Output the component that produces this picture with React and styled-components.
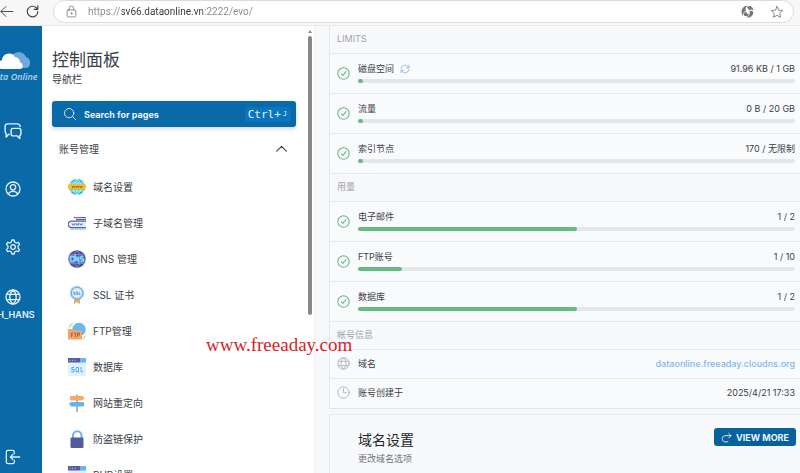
import React from 'react'
import styled, { createGlobalStyle, css } from 'styled-components'

const colors = {
    brand: '#0a6aa8',
    brandDark: '#07619a',
    text: '#3b4048',
    muted: '#a0a2ac',
    line: '#e6e8ec',
    panel: '#f8f9fb',
    green: '#66bb84',
    link: '#7fb9e6',
}

const GlobalStyle = createGlobalStyle`
    * {
        box-sizing: border-box;
    }

    body {
        margin: 0;
        overflow: hidden;
        background: white;
        color: ${colors.text};
        font-family: Inter, "Noto Sans CJK SC", sans-serif;
        font-size: 9px;
    }

    h1, h2, h3, p, ul {
        margin: 0;
        padding: 0;
        font-weight: 400;
    }

    ul {
        list-style: none;
    }

    button {
        border: 0;
        padding: 0;
        background: none;
        font-family: inherit;
        color: inherit;
    }

    a {
        color: inherit;
        text-decoration: none;
    }

    svg {
        display: block;
        flex: none;
    }
`

const Page = styled.div`
    position: relative;
    display: flex;
    flex-direction: column;
    height: 100vh;
    overflow: hidden;
`

/* browser bar */

const BrowserBar = styled.header`
    display: flex;
    flex: none;
    align-items: center;
    height: 26px;
    padding: 0 6px 2px 0;
    background: #f7f7f7;
    border-bottom: 1px solid #e9e9eb;
    color: #444;
`

const BarButton = styled.button`
    display: flex;
    align-items: center;
    justify-content: center;
    width: 26px;
    height: 22px;

    &:first-child {
        margin-left: -7px;
    }
`

const AddressBox = styled.label`
    display: flex;
    flex: 1;
    align-items: center;
    height: 23px;
    margin-left: 8px;
    padding: 0 2px 0 11px;
    background: white;
    border: 1px solid #dcdcdc;
    border-radius: 12px;
    color: #777;

    /* the host is darker than the rest of the address */
    input {
        flex: 1;
        min-width: 0;
        margin-left: 10px;
        padding: 0;
        border: 0;
        outline: 0;
        background: linear-gradient(to right, #888 34px, #333 34px 115px, #888 115px);
        background-clip: text;
        -webkit-text-fill-color: transparent;
        font: 10px/16px Roboto, sans-serif;
    }

    ${BarButton} {
        width: 29px;
        margin: 0;
    }
`

const Layout = styled.div`
    display: grid;
    flex: 1;
    grid-template-columns: 42px 272px 1fr;
    min-height: 0;
`

/* left rail, its left edge is scrolled out of the window */

const Rail = styled.nav`
    display: flex;
    flex-direction: column;
    align-items: center;
    width: 58px;
    margin-left: -16px;
    padding: 24px 0 6px;
    background: ${colors.brand};
    color: #e4f1fa;
`

const Logo = styled.a`
    display: flex;
    flex-direction: column;
    align-items: center;
    color: #b5d6ec;
    font: italic 600 9px/14px "Open Sans", sans-serif;
    white-space: nowrap;
`

const RailButton = styled.button`
    display: flex;
    flex-direction: column;
    align-items: center;
    justify-content: center;
    gap: 4px;
    height: ${(props) => (props.$small ? '20px' : '58px')};
    font-size: 9px;
    line-height: 12px;
    font-weight: 600;
`

const RailGroup = styled.div`
    display: flex;
    flex: 1;
    flex-direction: column;
    align-items: center;
    margin-top: 18px;
`

/* navigation */

const Sidebar = styled.aside`
    display: flex;
    justify-content: space-between;
    min-height: 0;
    background: white;
    overflow: hidden;
`

const SidebarBody = styled.div`
    flex: 1;
    padding: 22px 10px 0;

    h1 {
        font-size: 17px;
        line-height: 24px;
    }

    > p {
        font-size: 10px;
        line-height: 14px;
    }
`

const ScrollTrack = styled.div`
    display: flex;
    flex-direction: column;
    align-items: center;
    width: 8px;
    padding-top: 4px;
    color: #888;
`

const ScrollThumb = styled.div`
    width: 4px;
    height: 63%;
    margin-top: 3px;
    border-radius: 2px;
    background: #888;
`

const SearchButton = styled.button`
    display: flex;
    align-items: center;
    width: 100%;
    height: 26px;
    margin-top: 15px;
    padding: 0 5px 0 11px;
    border-radius: 3px;
    background: ${colors.brand};
    box-shadow: 0 2px 4px rgba(10, 60, 110, 0.2);
    color: #e8f3fb;
    font-size: 9px;
    font-weight: 700;

    span {
        flex: 1;
        margin-left: 7px;
        text-align: left;
    }

    kbd {
        display: flex;
        align-items: center;
        gap: 2px;
        height: 15px;
        padding: 0 4px 0 3px;
        border-radius: 2px;
        background: #0b76bd;
        font: 11px/15px "DejaVu Sans Mono", monospace;
    }

    kbd small {
        font-size: 7px;
    }
`

const GroupButton = styled.button`
    display: flex;
    align-items: center;
    justify-content: space-between;
    width: 100%;
    height: 16px;
    margin-top: 13px;
    padding: 0 8px 0 7px;
    font-size: 10px;
`

const NavList = styled.ul`
    margin-top: 13px;
    padding-left: 16px;

    a {
        display: flex;
        align-items: center;
        gap: 7px;
        height: 36px;
        font-size: 10px;
        line-height: 14px;
        white-space: nowrap;
    }
`

/* statistics */

const Main = styled.main`
    display: flex;
    flex-direction: column;
    gap: 5px;
    min-width: 0;
    padding-left: 14px;
    background: #f7f8fa;
    border-left: 1px solid #f0f1f4;
`

const card = css`
    background: ${colors.panel};
    border-left: 1px solid ${colors.line};
`

const StatsCard = styled.section`
    ${card}
    border-bottom: 1px solid #dfe1e6;
`

const GroupTitle = styled.h3`
    height: 28px;
    padding-left: 7px;
    border-bottom: 1px solid ${colors.line};
    color: ${colors.muted};
    font-size: 9px;
    line-height: 26px;
`

const StatRow = styled.div`
    display: flex;
    align-items: center;
    gap: 8px;
    height: ${(props) => (props.$slim ? '29px' : '40px')};
    padding: 0 5px 2px 7px;
    border-bottom: 1px solid ${colors.line};
    background: #f9fafc;

    &:last-child {
        border-bottom: 0;
    }
`

const StatBody = styled.div`
    flex: 1;
`

const StatText = styled.div`
    display: flex;
    align-items: center;
    gap: 6px;
    font-size: 9px;
    line-height: 13px;

    button {
        color: ${colors.link};
    }

    > :last-child {
        margin-left: auto;
    }
`

const StatLink = styled.a`
    color: ${colors.link};
    font-weight: 500;
`

const Track = styled.div`
    height: 4px;
    margin-top: 4px;
    border-radius: 2px;
    background: #e5e6e8;
`

const Fill = styled.div`
    height: 100%;
    min-width: 5px;
    border-radius: 2px;
    background: ${colors.green};
`

const DomainCard = styled.section`
    ${card}
    display: flex;
    flex: 1;
    align-items: flex-start;
    justify-content: space-between;
    padding: 13px 4px 0 28px;
    border-top: 1px solid ${colors.line};

    h2 {
        font-size: 14px;
        line-height: 24px;
        color: #22262e;
    }

    p {
        font-size: 9px;
        line-height: 13px;
        color: #70747c;
    }
`

const MoreButton = styled.button`
    display: flex;
    align-items: center;
    gap: 4px;
    height: 18px;
    padding: 0 7px;
    border-radius: 3px;
    background: ${colors.brandDark};
    color: #eaf4fb;
    font-size: 9px;
    font-weight: 700;
    white-space: nowrap;
`

const Watermark = styled.div`
    position: absolute;
    top: 334px;
    left: 206px;
    color: #d81e28;
    font: 19px/22px "Liberation Serif", serif;
`

/* icons */

const Line = ({ size = 16, width = 1.5, children }) => (
    <svg width={size} height={size} viewBox="0 0 24 24" fill="none" stroke="currentColor"
        strokeWidth={width} strokeLinecap="round" strokeLinejoin="round" aria-hidden="true">
        {children}
    </svg>
)

const BackIcon = () => <Line size={15}><path d="M22 12H3M11 4l-8 8 8 8" /></Line>
const ReloadIcon = () => <Line size={15} width={1.8}><path d="M20.500 12a8.500 8.500 0 1 1-2.500-6l2.500 2.500M20.500 2.500v6h-6" /></Line>
const LockIcon = () => (
    <Line size={13}>
        <rect x="4" y="9" width="16" height="13" rx="2" />
        <path d="M8 9V6a4 4 0 0 1 8 0v3" />
        <circle cx="12" cy="15.500" r="1" fill="currentColor" />
    </Line>
)
const StarIcon = () => (
    <Line size={14}><path d="M12 2.500l2.900 6.300 6.900.8-5.100 4.700 1.400 6.800-6.100-3.400-6.100 3.400 1.400-6.800-5.100-4.700 6.900-.8z" /></Line>
)
const SwirlIcon = () => (
    <svg width="13" height="13" viewBox="0 0 24 24" fill="#777" aria-hidden="true">
        <path d="M3 20C-2 11 3 1 13 1c-4 2-5 5-4 9-3 2-5 5-6 10z" />
        <path d="M11 5c4-6 11-2 12 5-3-2-6-2-8 0-1-3-2-4-4-5z" />
        <path d="M16 11c6-1 8 2 6 6-2 5-7 7-12 6 5-3 7-7 6-12z" />
        <path d="M5 19c0-4 2-6 4-7 1 3 3 5 6 5-2 4-6 5-10 2z" />
    </svg>
)
const SearchIcon = () => <Line size={14}><circle cx="10.500" cy="10.500" r="8" /><path d="M16.500 16.500l5 5" /></Line>
const ChevronUp = () => <Line size={13} width={2}><path d="M3 17l9-9 9 9" /></Line>
const SyncIcon = () => (
    <Line size={10} width={2}>
        <path d="M2.500 11a9.500 9.500 0 0 1 17-4.500l2 2.500M21.500 3v6h-6M21.500 13a9.500 9.500 0 0 1-17 4.500l-2-2.500M2.500 21v-6h6" />
    </Line>
)
const CheckIcon = () => (
    <Line size={13} width={2}><circle cx="12" cy="12" r="10.500" /><path d="M8 12.500l3 3 5.500-7" /></Line>
)
const ClockIcon = () => <Line size={13} width={1.8}><circle cx="12" cy="12" r="10.500" /><path d="M12 5v7.500h5.500" /></Line>
const GlobeIcon = ({ size, width }) => (
    <Line size={size} width={width}>
        <circle cx="12" cy="12" r="10.500" />
        <path d="M2.500 8h19M2.500 16h19M12 1.500C5.500 7 5.500 17 12 22.500M12 1.500C18.500 7 18.500 17 12 22.500" />
    </Line>
)
const ChatIcon = () => (
    <Line size={18} width={1.9}>
        <path d="M7 16.500H6L3 20v-4.500A3.500 3.500 0 0 1 1.500 13V6A3.500 3.500 0 0 1 5 2.500h13A3.500 3.500 0 0 1 21.500 6" />
        <path d="M12 8.500h8a2.500 2.500 0 0 1 2.500 2.500v5a2.500 2.500 0 0 1-1.500 2.300V22l-3.500-3.500H12A2.500 2.500 0 0 1 9.500 16v-5A2.500 2.500 0 0 1 12 8.500z" />
    </Line>
)
const UserIcon = () => (
    <Line size={16} width={1.9}>
        <circle cx="12" cy="12" r="10.500" /><circle cx="12" cy="9.500" r="4" />
        <path d="M5 19.500c1.500-3.500 4-4 7-4s5.500.5 7 4" />
    </Line>
)
const GearIcon = () => (
    <Line size={16} width={1.9}>
        <path d="M9.500 4.500L10.300 1.500h3.400l.8 3 2.500 1.500 3-.9 1.800 3-2.200 2.200v3.400l2.200 2.200-1.800 3-3-.9-2.500 1.500-.8 3h-3.400l-.8-3L7 18l-3 .9-1.800-3 2.200-2.200v-3.400L2.200 8.100l1.800-3 3 .9z" />
        <circle cx="12" cy="12" r="3.500" />
    </Line>
)
const LogoutIcon = () => (
    <Line size={16} width={1.9}>
        <path d="M14 7V4.500A2.500 2.500 0 0 0 11.500 2h-7A2.500 2.500 0 0 0 2 4.500v15A2.500 2.500 0 0 0 4.500 22h7a2.500 2.500 0 0 0 2.500-2.500V17M22 12H8M12 8l-4 4 4 4" />
    </Line>
)
const ForwardIcon = () => (
    <Line size={11} width={1.9}><path d="M22 8H9a7 7 0 0 0-2 13.500h8M17 3l5 5-5 5" /></Line>
)
const CloudLogo = () => (
    <svg width="38" height="20" viewBox="0 0 38 20" aria-hidden="true">
        <path d="M16 18a6 6 0 0 1 1-10 8 8 0 0 1 15-1 6 6 0 0 1 1 11z" fill="#6fa9db" />
        <path d="M7 19a5 5 0 0 1 1-9 7 7 0 0 1 13-3 6 6 0 0 1 5 5 4 4 0 0 1 1 7z" fill="white" />
    </svg>
)

const Art = ({ children }) => (
    <svg width="18" height="18" viewBox="0 0 36 36" aria-hidden="true">{children}</svg>
)

/* three short marks standing for tiny lettering on a badge */
const Marks = ({ y, color }) => (
    <path d={`M8 ${y - 2}l1.500 4 1.500-3 1.500 3 1.500-4M16 ${y - 2}l1 4 1.500-3 1.500 3 1-4M23 ${y - 2}l1.500 4 1.500-3 1.500 3 1.500-4`}
        fill="none" stroke={color} strokeWidth="1.400" />
)

const DomainArt = () => (
    <Art>
        <circle cx="18" cy="18" r="16" fill="#35b8dc" />
        <path d="M18 2v32M3 10h30M3 26h30M18 2C8 9 8 27 18 34M18 2c10 7 10 25 0 32" fill="none" stroke="#c6f0f6" strokeWidth="2" />
        <rect x="0" y="12" width="36" height="11" rx="3" fill="#f2c230" />
        <Marks y={17.5} color="#7a5a28" />
    </Art>
)
const SubdomainArt = () => (
    <Art>
        <path d="M12 7h24M16 11h20" stroke="#5d61a8" strokeWidth="2.500" />
        <path d="M16 7h6" stroke="#e0704a" strokeWidth="2.500" />
        <path d="M36 14H7a6.500 6.500 0 0 0 0 13h29" fill="#e3f1fc" stroke="#5a5fa6" strokeWidth="2.500" />
        <Marks y={20.5} color="#5a5fa6" />
        <path d="M4 30h32" stroke="#73b9ee" strokeWidth="2" />
    </Art>
)
const DnsArt = () => (
    <Art>
        <circle cx="18" cy="18" r="17.500" fill="#4f5598" />
        <path d="M5 9h26M5 27h26M18 2C9 8 9 28 18 34M18 2c9 6 9 26 0 32" fill="none" stroke="#7b82c4" strokeWidth="2" />
        <path d="M5 13h4a5 5 0 0 1 0 10H5zM15 23V13l6 10V13M31 13h-3a2.500 2.500 0 0 0 0 5h1a2.500 2.500 0 0 1 0 5h-4" fill="none" stroke="#7ed0ff" strokeWidth="4" />
    </Art>
)
const SslArt = () => (
    <Art>
        <path d="M12 25h12v11l-6-4-6 4z" fill="#eba66c" />
        <circle cx="18" cy="14" r="12.500" fill="#e7f4fe" stroke="#6cb8ee" strokeWidth="3" strokeDasharray="4 1" />
        <circle cx="18" cy="14" r="11" fill="#dcedfb" stroke="#6cb8ee" strokeWidth="2" />
        <path d="M14.500 12h-3v2.500h3V17h-3M20 12h-3v2.500h3V17h-3M22.500 12v5h2.500" fill="none" stroke="#5a6fae" strokeWidth="1.300" />
    </Art>
)
const FtpArt = () => (
    <Art>
        <circle cx="22" cy="15" r="13.500" fill="#69b7ef" />
        <path d="M3 11q0-6 6-8M34 27q0 5-5 7" fill="none" stroke="#74cba0" strokeWidth="2" />
        <path d="M0 14h10l3 3h15v18H0z" fill="#f5a562" />
        <path d="M10 22H7v8M7 26h3M12 22h5M14.500 22v8M19 30v-8h4v4h-4" fill="none" stroke="#8c5b54" strokeWidth="1.600" />
    </Art>
)
const WindowBase = () => (
    <>
        <rect width="36" height="36" rx="1" fill="#dff1fe" />
        <path d="M0 0h25v9H0z" fill="#5b5b9c" />
        <path d="M25 0h11v9H25z" fill="#65b5ee" />
        <path d="M3 4.500h2M8 4.500h2M13 4.500h2" stroke="#c6c9ea" strokeWidth="2" />
    </>
)
const SqlArt = () => (
    <Art>
        <WindowBase />
        <path d="M12 19H7.500v4H12v4.500H6.500M16 19h5v8.500h-5zM20 26l2.500 3M26 18v9.500h5" fill="none" stroke="#58ace6" strokeWidth="2" />
    </Art>
)
const PhpArt = () => <Art><WindowBase /></Art>
const SignArt = () => (
    <Art>
        <path d="M18 1v35" stroke="#8b86a4" strokeWidth="2.500" />
        <path d="M6 4h23l4 4-4 5H6a2 2 0 0 1-2-2V6a2 2 0 0 1 2-2z" fill="#f5ab67" />
        <path d="M30 16H6l-4 4 4 5h24a2 2 0 0 0 2-2v-5a2 2 0 0 0-2-2z" fill="#64b5ee" />
    </Art>
)
const PadlockArt = () => (
    <Art>
        <path d="M10 19v-8a8.500 8.500 0 0 1 17 0v8" fill="none" stroke="#64b5ee" strokeWidth="4" />
        <rect x="5" y="15" width="26" height="21" rx="2" fill="#545a9e" />
    </Art>
)

const navItems = [
    { label: '域名设置', Icon: DomainArt },
    { label: '子域名管理', Icon: SubdomainArt },
    { label: 'DNS 管理', Icon: DnsArt },
    { label: 'SSL 证书', Icon: SslArt },
    { label: 'FTP管理', Icon: FtpArt },
    { label: '数据库', Icon: SqlArt },
    { label: '网站重定向', Icon: SignArt },
    { label: '防盗链保护', Icon: PadlockArt },
    { label: 'PHP设置', Icon: PhpArt },
]

const limits = [
    { label: '磁盘空间', value: '91.96 KB / 1 GB', percent: 0, sync: true },
    { label: '流量', value: '0 B / 20 GB', percent: 0 },
    { label: '索引节点', value: '170 / 无限制', percent: 0 },
]

const usage = [
    { label: '电子邮件', value: '1 / 2', percent: 50 },
    { label: 'FTP账号', value: '1 / 10', percent: 10 },
    { label: '数据库', value: '1 / 2', percent: 50 },
]

const CheckMark = styled.span`
    padding-top: 2px;
    color: ${colors.green};
`

const InfoMark = styled.span`
    color: #b4b6bc;
`

const Stat = ({ label, value, percent, sync }) => (
    <StatRow>
        <CheckMark><CheckIcon /></CheckMark>
        <StatBody>
            <StatText>
                <span>{label}</span>
                {sync && <button aria-label="refresh"><SyncIcon /></button>}
                <span>{value}</span>
            </StatText>
            <Track role="progressbar" aria-label={label} aria-valuenow={percent}>
                <Fill style={{ width: `${percent}%` }} />
            </Track>
        </StatBody>
    </StatRow>
)

const App = () => (
    <Page>
        <GlobalStyle />
        <BrowserBar>
            <BarButton aria-label="back"><BackIcon /></BarButton>
            <BarButton aria-label="reload"><ReloadIcon /></BarButton>
            <AddressBox>
                <LockIcon />
                <input aria-label="address" defaultValue="https://sv66.dataonline.vn:2222/evo/" />
                <BarButton aria-label="extension"><SwirlIcon /></BarButton>
                <BarButton aria-label="favorite"><StarIcon /></BarButton>
            </AddressBox>
        </BrowserBar>
        <Layout>
            <Rail>
                <Logo href="#"><CloudLogo />Data Online</Logo>
                <RailGroup>
                    <RailButton aria-label="messages"><ChatIcon /></RailButton>
                    <RailButton aria-label="account"><UserIcon /></RailButton>
                    <RailButton aria-label="settings"><GearIcon /></RailButton>
                    <RailButton><GlobeIcon size={16} width={1.9} />ZH_HANS</RailButton>
                </RailGroup>
                <RailButton $small aria-label="logout"><LogoutIcon /></RailButton>
            </Rail>
            <Sidebar>
                <SidebarBody>
                    <h1>控制面板</h1>
                    <p>导航栏</p>
                    <SearchButton>
                        <SearchIcon />
                        <span>Search for pages</span>
                        <kbd>Ctrl+<small>J</small></kbd>
                    </SearchButton>
                    <GroupButton>账号管理<ChevronUp /></GroupButton>
                    <NavList>
                        {navItems.map(({ label, Icon }) => (
                            <li key={label}><a href="#"><Icon />{label}</a></li>
                        ))}
                    </NavList>
                </SidebarBody>
                <ScrollTrack>
                    <svg width="4" height="3" viewBox="0 0 4 3"><path d="M0 3l2-3 2 3z" fill="currentColor" /></svg>
                    <ScrollThumb />
                </ScrollTrack>
            </Sidebar>
            <Main>
                <StatsCard>
                    <GroupTitle>LIMITS</GroupTitle>
                    {limits.map((row) => <Stat key={row.label} {...row} />)}
                    <GroupTitle>用量</GroupTitle>
                    {usage.map((row) => <Stat key={row.label} {...row} />)}
                    <GroupTitle>帐号信息</GroupTitle>
                    <StatRow $slim>
                        <InfoMark><GlobeIcon size={13} width={1.8} /></InfoMark>
                        <StatBody>
                            <StatText>
                                <span>域名</span>
                                <StatLink href="#">dataonline.freeaday.cloudns.org</StatLink>
                            </StatText>
                        </StatBody>
                    </StatRow>
                    <StatRow $slim>
                        <InfoMark><ClockIcon /></InfoMark>
                        <StatBody>
                            <StatText><span>账号创建于</span><span>2025/4/21 17:33</span></StatText>
                        </StatBody>
                    </StatRow>
                </StatsCard>
                <DomainCard>
                    <div>
                        <h2>域名设置</h2>
                        <p>更改域名选项</p>
                    </div>
                    <MoreButton><ForwardIcon />VIEW MORE</MoreButton>
                </DomainCard>
            </Main>
        </Layout>
        <Watermark>www.freeaday.com</Watermark>
    </Page>
)

export default App
